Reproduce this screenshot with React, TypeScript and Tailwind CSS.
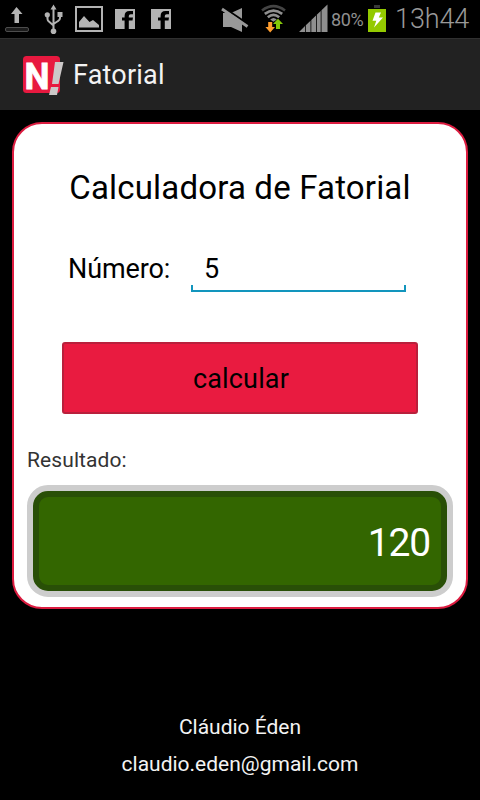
import { useState } from 'react'
import type { FormEvent } from 'react'

const fatorial = (n: number): number => (n <= 1 ? 1 : n * fatorial(n - 1))

function FacebookIcon() {
  return (
    <svg width="20" height="20" viewBox="0 0 20 20" className="shrink-0">
      <path d="M0 0H20V20H0Z" fill="#b3b3b3" />
      <path d="M9.6 20V11.6H7V8.4H9.6V7Q9.6 2 14.5 2H18V5.2H15.7Q13.8 5.2 13.8 7V8.4H18L17.5 11.6H13.8V20Z" fill="#000" />
    </svg>
  )
}

function StatusBar() {
  return (
    <div className="flex h-[38px] items-center bg-black">
      {/* Notifications */}
      <svg width="26" height="38" viewBox="0 0 26 38" className="ml-[4px] shrink-0">
        <path d="M12.5 7L18.5 14H15V23H10.5V14H7Z" fill="#b3b3b3" />
        <rect x="1.5" y="27.5" width="23" height="4" rx="1.5" fill="#1c1c1c" stroke="#4d4d4d" />
      </svg>
      <svg width="20" height="38" viewBox="0 0 20 38" className="ml-[14px] shrink-0" fill="none" stroke="#b3b3b3" strokeWidth="2">
        <path d="M9.5 8V31M3.5 16V19Q3.5 21 5.5 22L9.5 25.5M16 16V18Q16 20 14 21L9.5 24" />
        <path d="M9.5 4.5L12.5 9.5H6.5Z" fill="#b3b3b3" stroke="none" />
        <circle cx="9.5" cy="31.3" r="2.8" fill="#b3b3b3" stroke="none" />
        <circle cx="3.3" cy="14.8" r="2.6" fill="#b3b3b3" stroke="none" />
        <path d="M13.5 12H18.5V17H13.5Z" fill="#b3b3b3" stroke="none" />
      </svg>
      <svg width="28" height="26" viewBox="0 0 28 26" className="ml-[11px] shrink-0">
        <path d="M1 1H27V25H1Z" fill="none" stroke="#b3b3b3" strokeWidth="2" />
        <path d="M4 21.5V16L9 10L14.5 16L18 14L24 19V21.5Z" fill="#b3b3b3" />
      </svg>
      <div className="ml-[12px] flex gap-[16px]">
        <FacebookIcon />
        <FacebookIcon />
      </div>

      {/* Muted */}
      <svg width="28" height="38" viewBox="0 0 28 38" className="ml-[50px] shrink-0">
        <path d="M2 13H10L21 8V32L10 27H2Z" fill="#999" />
        <path d="M3 7.8L28 24.8" stroke="#000" strokeWidth="2.2" />
        <path d="M1 9L26.5 26.5" stroke="#999" strokeWidth="2.8" />
      </svg>

      {/* Wi-Fi with traffic arrows */}
      <svg width="26" height="38" viewBox="0 0 26 38" className="ml-[12px] shrink-0">
        <g fill="none" strokeWidth="2.6">
          <path d="M1 10.5Q12.5 1.9 24 10.5" stroke="#444" />
          <path d="M3.8 13.9Q12.5 7.2 21.2 13.9" stroke="#8f8f8f" />
          <path d="M6.8 17.2Q12.5 12.5 18.2 17.2" stroke="#8f8f8f" />
        </g>
        <path d="M9.2 19.5Q12.5 16.5 15.8 19.5L12.5 21.8Z" fill="#8f8f8f" />
        <path d="M7.2 22H11.2V27H14L9.2 32.5L4.4 27H7.2Z" fill="#ff9d2e" />
        <path d="M17 18.8L22 24H19V29H15V24H12Z" fill="#85c808" />
      </svg>

      {/* Signal strength */}
      <svg width="29" height="38" viewBox="0 0 29 38" className="ml-[12px] shrink-0" fill="#8f8f8f">
        <path d="M0 32L6 26V32ZM6.8 25.3L11.5 20.7V32H6.8ZM12.3 20L17 15.4V32H12.3ZM17.8 14.7L21.7 11V32H17.8ZM22.5 10.2L28.5 4.5V32H22.5Z" />
      </svg>
      <span className="ml-[3px] mt-[2px] w-[33px] text-[18px] leading-none tracking-[-0.4px] whitespace-nowrap text-[#8f8f8f]">80%</span>

      {/* Battery */}
      <svg width="18" height="38" viewBox="0 0 18 38" className="ml-[4px] shrink-0">
        <path d="M6 5H12V8H6Z" fill="#383838" />
        <path d="M0 9H18V32H0Z" fill="#93c900" />
        <path d="M7.5 12.5H13L10.8 17.5H15L6 27.5L8.3 20.8H4.5Z" fill="#fff" />
      </svg>
      <span className="ml-[9px] text-[27px] leading-none font-light tracking-[-0.1px] whitespace-nowrap text-[#999]">13h44</span>
    </div>
  )
}

function Logo() {
  return (
    <svg width="42" height="42" viewBox="0 0 42 42" className="shrink-0 overflow-visible">
      <rect x="1" y="2" width="37" height="37" rx="3.5" fill="#e8193f" />
      <text x="2.5" y="34.5" fontSize="36" fontWeight="700" fill="#fff" stroke="#fff" strokeWidth="0.8" textLength="25" lengthAdjust="spacingAndGlyphs">N</text>
      <path d="M33 8H41.5L36.5 30H30ZM29 33H36.5L35 41H27Z" fill="#ccc8c8" />
    </svg>
  )
}

export default function App() {
  const [numero, setNumero] = useState('5')
  const [resultado, setResultado] = useState('120')

  const handleCalcular = (e: FormEvent) => {
    e.preventDefault()
    const n = parseInt(numero, 10)
    if (!isNaN(n) && n >= 0 && n <= 170) {
      setResultado(String(fatorial(n)))
    }
  }

  return (
    <main className="flex h-[800px] w-[480px] flex-col overflow-hidden bg-black font-['Roboto',sans-serif]">
      <StatusBar />

      {/* Action bar */}
      <header className="flex h-[72px] items-center border-t border-[#303030] bg-[#222] pl-[22px]">
        <Logo />
        <h1 className="mt-[2px] ml-[9px] text-[27px] leading-none tracking-[0.2px] text-[#f3f3f3]">Fatorial</h1>
      </header>

      {/* Calculator card */}
      <form
        onSubmit={handleCalcular}
        className="mx-[12px] mt-[12px] flex h-[487px] flex-col rounded-[30px] border-2 border-[#dc1c40] bg-white px-[13px]"
      >
        <h2 className="mt-[43px] text-center text-[33px] leading-[42px] tracking-[0.17px] whitespace-nowrap text-black">
          Calculadora de Fatorial
        </h2>

        <div className="mt-[35px] flex h-[50px] pl-[41px] text-[27px] leading-[50px] text-black">
          <label htmlFor="numero" className="w-[123px] tracking-[-0.1px]">Número:</label>
          <div className="flex w-[215px] flex-col">
            <input
              id="numero"
              value={numero}
              onChange={(e) => setNumero(e.target.value)}
              inputMode="numeric"
              className="h-[41px] w-full bg-transparent pt-[8px] pl-[13px] leading-none outline-none"
            />
            <div className="h-[7px] border-x-2 border-b-2 border-[#1295bd]" />
          </div>
        </div>

        <button
          type="submit"
          className="mx-[35px] mt-[48px] h-[72px] rounded-[3px] border-2 border-[#b9203c] bg-[#e91b40] pt-[2px] pl-[2px] text-[27px] leading-none tracking-[0.15px] text-black"
        >
          calcular
        </button>

        <p className="mt-[34px] text-[21px] leading-[24px] tracking-[0.1px] text-[#333]">Resultado:</p>
        <div className="mt-[13px] h-[112px] rounded-[21px] border-[6px] border-[#cdcdcd] bg-[#cdcdcd]">
          <div className="flex h-full items-center justify-end rounded-[15px] border-[6px] border-[#294f07] bg-[#336600] pt-[4px] pr-[11px] text-[39px] leading-none tracking-[-1.2px] text-white">
            {resultado}
          </div>
        </div>
      </form>

      {/* Author */}
      <footer className="mt-[100px] text-center text-[21px] leading-[37px] text-[#f3f3f3]">
        <p>Cláudio Éden</p>
        <p>claudio.eden@gmail.com</p>
      </footer>
    </main>
  )
}
